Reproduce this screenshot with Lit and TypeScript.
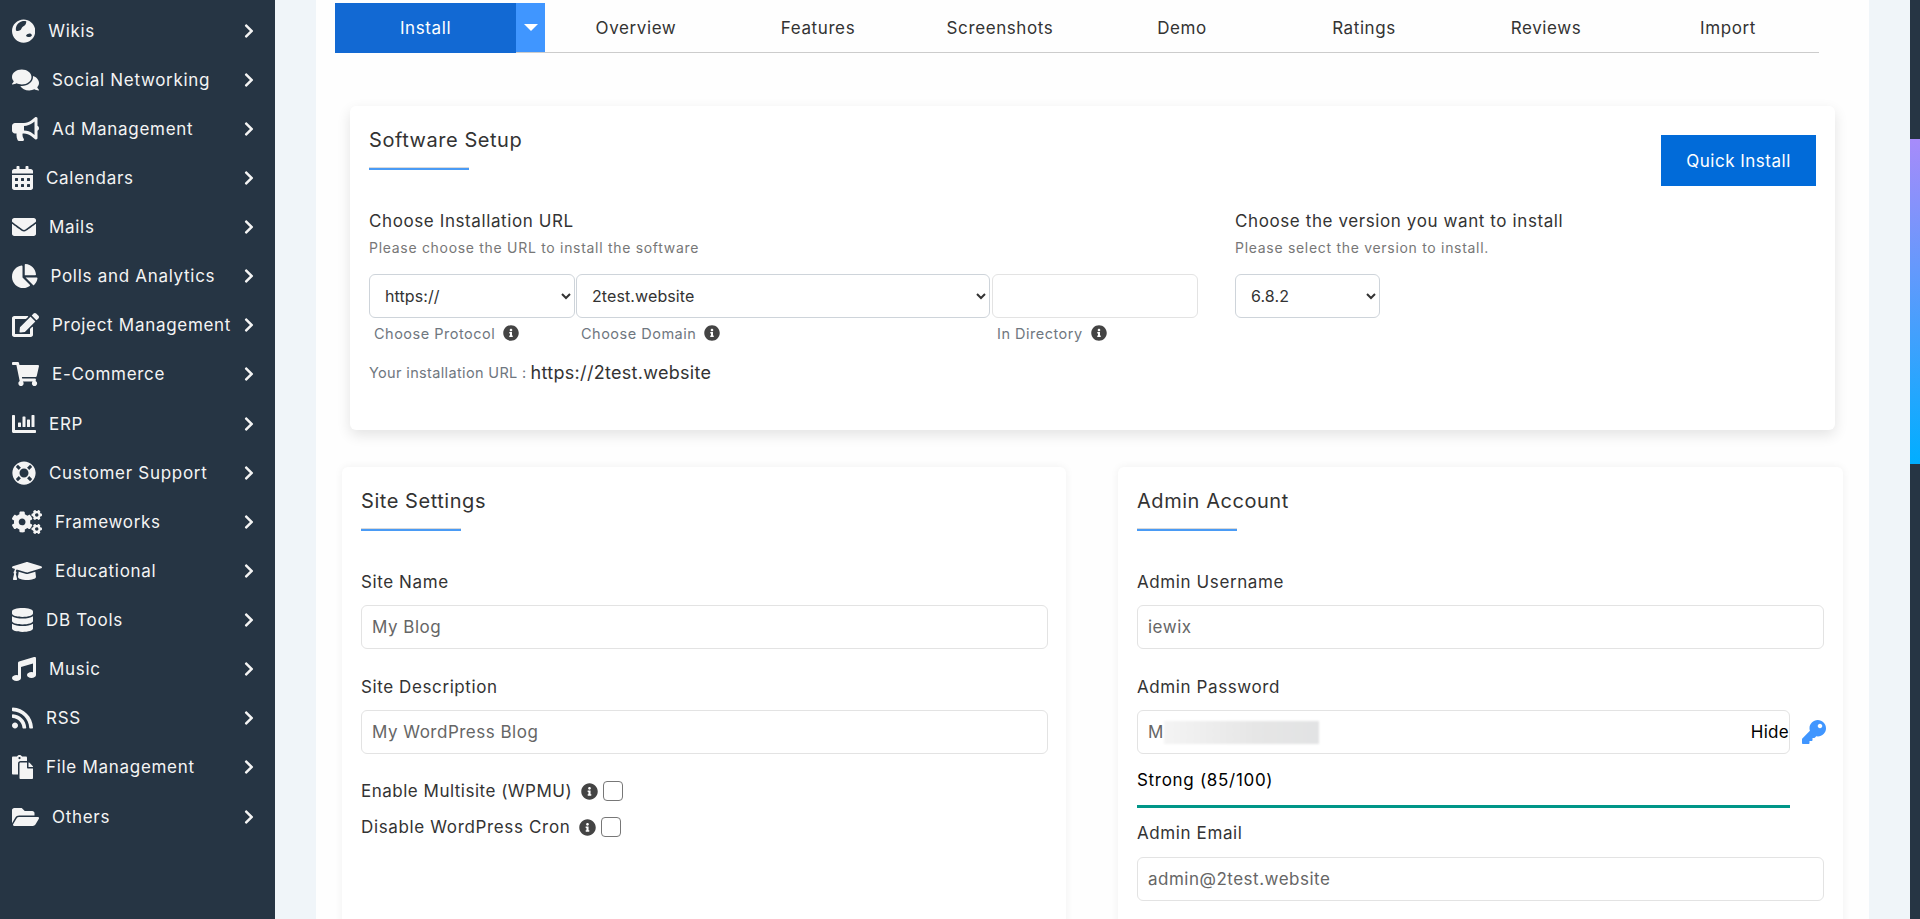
import { LitElement, html, css } from 'lit';
import { customElement } from 'lit/decorators.js';

interface Icon {
  w: number;
  d: string;
}

const I: Record<string, Icon> = {
  globe: { w: 496, d: 'M248 8C111 8 0 119 0 256s111 248 248 248 248-111 248-248S385 8 248 8zM215 46c30-6 60-4 88 4 4 28-6 54-22 78-14 20-40 26-58 42-20 20-24 58-52 72-26 12-58 20-86 2-10-46 6-92 32-130 24-34 58-60 98-68zm120 276c20-12 50-16 72-2 14 10 22 30 10 44-14 16-38 24-60 18-20-4-44-8-54-22-6-14 18-30 32-38z' },
  comments: { w: 576, d: 'M416 192c0-88.4-93.1-160-208-160S0 103.6 0 192c0 34.3 14.1 65.9 38 92-13.4 30.2-35.5 54.2-35.8 54.5-2.2 2.3-2.8 5.7-1.5 8.7S4.8 352 8 352c36.6 0 66.9-12.3 88.7-25 32.2 15.7 70.3 25 111.3 25 114.9 0 208-71.6 208-160zm122 220c23.9-26 38-57.7 38-92 0-66.9-53.5-124.2-129.3-148.1.9 6.6 1.3 13.3 1.3 20.1 0 105.9-107.7 192-240 192-10.8 0-21.3-.8-31.7-1.9C207.8 439.6 281.8 480 368 480c41 0 79.1-9.2 111.3-25 21.8 12.7 52.1 25 88.7 25 3.2 0 6.1-1.9 7.3-4.8 1.3-2.9.7-6.3-1.5-8.7-.3-.3-22.4-24.2-35.8-54.5z' },
  bullhorn: { w: 576, d: 'M576 240c0-23.63-12.95-44.04-32-55.12V32.01C544 23.26 537.02 0 512 0c-7.12 0-14.19 2.38-19.98 7.02l-85.03 68.03C364.28 109.19 310.66 128 256 128H64c-35.35 0-64 28.65-64 64v96c0 35.35 28.65 64 64 64h33.7c-1.39 10.48-2.18 21.14-2.18 32 0 39.77 9.26 77.35 25.56 110.94 5.19 10.69 16.52 17.06 28.4 17.06h74.28c26.05 0 41.69-29.84 25.9-50.56-16.4-21.52-26.15-48.36-26.15-77.44 0-11.11 1.62-21.79 4.41-32H256c54.66 0 108.28 18.81 150.98 52.95l85.03 68.03a32.023 32.023 0 0 0 19.98 7.02c24.92 0 32-22.78 32-32V295.13C563.05 284.04 576 263.63 576 240zm-96 141.42l-33.05-26.44C392.95 311.78 325.12 288 256 288v-96c69.12 0 136.95-23.78 190.95-66.98L480 98.58v282.84z' },
  calendar: { w: 448, d: 'M0 464c0 26.5 21.5 48 48 48h352c26.5 0 48-21.5 48-48V192H0v272zm320-196c0-6.6 5.4-12 12-12h40c6.6 0 12 5.4 12 12v40c0 6.6-5.4 12-12 12h-40c-6.6 0-12-5.4-12-12v-40zm0 128c0-6.6 5.4-12 12-12h40c6.6 0 12 5.4 12 12v40c0 6.6-5.4 12-12 12h-40c-6.6 0-12-5.4-12-12v-40zM192 268c0-6.6 5.4-12 12-12h40c6.6 0 12 5.4 12 12v40c0 6.6-5.4 12-12 12h-40c-6.6 0-12-5.4-12-12v-40zm0 128c0-6.6 5.4-12 12-12h40c6.6 0 12 5.4 12 12v40c0 6.6-5.4 12-12 12h-40c-6.6 0-12-5.4-12-12v-40zM64 268c0-6.6 5.4-12 12-12h40c6.6 0 12 5.4 12 12v40c0 6.6-5.4 12-12 12H76c-6.6 0-12-5.4-12-12v-40zm0 128c0-6.6 5.4-12 12-12h40c6.6 0 12 5.4 12 12v40c0 6.6-5.4 12-12 12H76c-6.6 0-12-5.4-12-12v-40zM400 64h-48V16c0-8.8-7.2-16-16-16h-32c-8.8 0-16 7.2-16 16v48H160V16c0-8.8-7.2-16-16-16h-32c-8.8 0-16 7.2-16 16v48H48C21.5 64 0 85.5 0 112v48h448v-48c0-26.5-21.5-48-48-48z' },
  envelope: { w: 512, d: 'M502.3 190.8c3.9-3.1 9.7-.2 9.7 4.7V400c0 26.5-21.5 48-48 48H48c-26.5 0-48-21.5-48-48V195.6c0-5 5.7-7.8 9.7-4.7 22.4 17.4 52.1 39.5 154.1 113.6 21.1 15.4 56.7 47.8 92.2 47.6 35.7.3 72-32.8 92.3-47.6 102-74.1 131.6-96.3 154-113.7zM256 320c23.2.4 56.6-29.2 73.4-41.4 132.7-96.3 142.8-104.7 173.4-128.7 5.8-4.5 9.2-11.5 9.2-18.9v-19c0-26.5-21.5-48-48-48H48C21.5 64 0 85.5 0 112v19c0 7.4 3.4 14.3 9.2 18.9 30.6 23.9 40.7 32.4 173.4 128.7 16.8 12.2 50.2 41.8 73.4 41.4z' },
  pie: { w: 544, d: 'M527.79 288H290.5l158.03 158.03c6.04 6.04 15.98 6.53 22.19.68 38.7-36.46 65.32-85.61 73.13-140.86 1.34-9.46-6.51-17.85-16.06-17.85zm-15.83-64.8C503.72 103.74 408.26 8.28 288.8.04 279.68-.59 272 7.1 272 16.24V240h223.77c9.14 0 16.82-7.68 16.19-16.8zM224 288V50.71c0-9.55-8.39-17.4-17.84-16.06C86.99 51.49-4.1 155.6.14 280.37 4.5 408.51 114.83 513.59 243.03 511.98c50.4-.63 96.97-16.87 135.26-44.03 7.9-5.6 8.42-17.23 1.57-24.08L224 288z' },
  edit: { w: 576, d: 'M402.6 83.2l90.2 90.2c3.8 3.8 3.8 10 0 13.8L274.4 405.6l-92.8 10.3c-12.4 1.4-22.9-9.1-21.5-21.5l10.3-92.8L388.8 83.2c3.8-3.8 10-3.8 13.8 0zm162-22.9l-48.8-48.8c-15.2-15.2-39.9-15.2-55.2 0l-35.4 35.4c-3.8 3.8-3.8 10 0 13.8l90.2 90.2c3.8 3.8 10 3.8 13.8 0l35.4-35.4c15.2-15.3 15.2-40 0-55.2zM384 346.2V448H64V128h229.8c3.2 0 6.2-1.3 8.5-3.5l40-40c7.6-7.6 2.2-20.5-8.5-20.5H48C21.5 64 0 85.5 0 112v352c0 26.5 21.5 48 48 48h352c26.5 0 48-21.5 48-48V306.2c0-10.7-12.9-16-20.5-8.5l-40 40c-2.2 2.3-3.5 5.3-3.5 8.5z' },
  cart: { w: 576, d: 'M528.12 301.319l47.273-208C578.806 78.301 567.391 64 551.99 64H159.208l-9.166-44.81C147.758 8.021 137.93 0 126.529 0H24C10.745 0 0 10.745 0 24v16c0 13.255 10.745 24 24 24h69.883l70.248 343.435C147.325 417.1 136 435.222 136 456c0 30.928 25.072 56 56 56s56-25.072 56-56c0-15.674-6.447-29.835-16.824-40h209.647C430.447 426.165 424 440.326 424 456c0 30.928 25.072 56 56 56s56-25.072 56-56c0-22.172-12.888-41.332-31.579-50.405l5.517-24.276c3.413-15.018-8.002-29.319-23.403-29.319H218.117l-6.545-32h293.145c11.206 0 20.92-7.754 23.403-18.681z' },
  chart: { w: 512, d: 'M332.8 320h38.4c6.4 0 12.8-6.4 12.8-12.8V172.8c0-6.4-6.4-12.8-12.8-12.8h-38.4c-6.4 0-12.8 6.4-12.8 12.8v134.4c0 6.4 6.4 12.8 12.8 12.8zm96 0h38.4c6.4 0 12.8-6.4 12.8-12.8V76.8c0-6.4-6.4-12.8-12.8-12.8h-38.4c-6.4 0-12.8 6.4-12.8 12.8v230.4c0 6.4 6.4 12.8 12.8 12.8zm-288 0h38.4c6.4 0 12.8-6.4 12.8-12.8v-70.4c0-6.4-6.4-12.8-12.8-12.8h-38.4c-6.4 0-12.8 6.4-12.8 12.8v70.4c0 6.4 6.4 12.8 12.8 12.8zm96 0h38.4c6.4 0 12.8-6.4 12.8-12.8V108.8c0-6.4-6.4-12.8-12.8-12.8h-38.4c-6.4 0-12.8 6.4-12.8 12.8v198.4c0 6.4 6.4 12.8 12.8 12.8zM496 384H64V80c0-8.84-7.16-16-16-16H16C7.16 64 0 71.16 0 80v336c0 17.67 14.33 32 32 32h464c8.84 0 16-7.16 16-16v-32c0-8.84-7.16-16-16-16z' },
  ring: { w: 512, d: 'M256 8C119.033 8 8 119.033 8 256s111.033 248 248 248 248-111.033 248-248S392.967 8 256 8zm173.696 119.559l-63.399 63.399c-10.987-18.559-26.67-34.252-45.255-45.255l63.399-63.399a218.396 218.396 0 0 1 45.255 45.255zM256 352c-53.019 0-96-42.981-96-96s42.981-96 96-96 96 42.981 96 96-42.981 96-96 96zM127.559 82.304l63.399 63.399c-18.559 10.987-34.252 26.67-45.255 45.255l-63.399-63.399a218.372 218.372 0 0 1 45.255-45.255zM82.304 384.441l63.399-63.399c10.987 18.559 26.67 34.252 45.255 45.255l-63.399 63.399a218.396 218.396 0 0 1-45.255-45.255zm302.137 45.255l-63.399-63.399c18.559-10.987 34.252-26.67 45.255-45.255l63.399 63.399a218.403 218.403 0 0 1-45.255 45.255z' },
  cogs: { w: 640, d: 'M512.1 191l-8.2 14.3c-3 5.3-9.4 7.5-15.1 5.4-11.8-4.4-22.6-10.7-32.1-18.6-4.6-3.8-5.8-10.5-2.8-15.7l8.2-14.3c-6.9-8-12.3-17.3-15.9-27.4h-16.5c-6 0-11.2-4.3-12.2-10.3-2-12-2.1-24.6 0-37.1 1-6 6.2-10.4 12.2-10.4h16.5c3.6-10.1 9-19.4 15.9-27.4l-8.2-14.3c-3-5.2-1.9-11.9 2.8-15.7 9.5-7.9 20.4-14.2 32.1-18.6 5.7-2.1 12.1.1 15.1 5.4l8.2 14.3c10.5-1.9 21.2-1.9 31.7 0L552 6.3c3-5.3 9.4-7.5 15.1-5.4 11.8 4.4 22.6 10.7 32.1 18.6 4.6 3.8 5.8 10.5 2.8 15.7l-8.2 14.3c6.9 8 12.3 17.3 15.9 27.4h16.5c6 0 11.2 4.3 12.2 10.3 2 12 2.1 24.6 0 37.1-1 6-6.2 10.4-12.2 10.4h-16.5c-3.6 10.1-9 19.4-15.9 27.4l8.2 14.3c3 5.2 1.9 11.9-2.8 15.7-9.5 7.9-20.4 14.2-32.1 18.6-5.7 2.1-12.1-.1-15.1-5.4l-8.2-14.3c-10.4 1.9-21.2 1.9-31.7 0zm-10.5-58.8c38.5 29.6 82.4-14.3 52.8-52.8-38.5-29.7-82.4 14.3-52.8 52.8zM386.3 286.1l33.7 16.8c10.1 5.8 14.5 18.1 10.5 29.1-8.9 24.2-26.4 46.4-42.6 65.8-7.4 8.9-20.2 11.1-30.3 5.3l-29.1-16.8c-16 13.7-34.6 24.6-54.9 31.7v33.6c0 11.6-8.3 21.6-19.7 23.6-24.6 4.2-50.4 4.4-75.9 0-11.5-2-20-11.9-20-23.6V418c-20.3-7.2-38.9-18-54.9-31.7L74 403c-10 5.8-22.9 3.6-30.3-5.3-16.2-19.4-33.3-41.6-42.2-65.7-4-10.9.4-23.2 10.5-29.1l33.3-16.8c-3.9-20.9-3.9-42.4 0-63.4L12 205.8c-10.1-5.8-14.6-18.1-10.5-29 8.9-24.2 26-46.4 42.2-65.8 7.4-8.9 20.2-11.1 30.3-5.3l29.1 16.8c16-13.7 34.6-24.6 54.9-31.7V57.1c0-11.5 8.2-21.5 19.6-23.5 24.6-4.2 50.5-4.4 76-.1 11.5 2 20 11.9 20 23.6v33.6c20.3 7.2 38.9 18 54.9 31.7l29.1-16.8c10-5.8 22.9-3.6 30.3 5.3 16.2 19.4 33.2 41.6 42.1 65.8 4 10.9.1 23.2-10 29.1l-33.7 16.8c3.9 21 3.9 42.5 0 63.5zm-117.6 21.1c59.2-77-28.7-164.9-105.7-105.7-59.2 77 28.7 164.9 105.7 105.7zm243.4 182.7l-8.2 14.3c-3 5.3-9.4 7.5-15.1 5.4-11.8-4.4-22.6-10.7-32.1-18.6-4.6-3.8-5.8-10.5-2.8-15.7l8.2-14.3c-6.9-8-12.3-17.3-15.9-27.4h-16.5c-6 0-11.2-4.3-12.2-10.3-2-12-2.1-24.6 0-37.1 1-6 6.2-10.4 12.2-10.4h16.5c3.6-10.1 9-19.4 15.9-27.4l-8.2-14.3c-3-5.2-1.9-11.9 2.8-15.7 9.5-7.9 20.4-14.2 32.1-18.6 5.7-2.1 12.1.1 15.1 5.4l8.2 14.3c10.5-1.9 21.2-1.9 31.7 0l8.2-14.3c3-5.3 9.4-7.5 15.1-5.4 11.8 4.4 22.6 10.7 32.1 18.6 4.6 3.8 5.8 10.5 2.8 15.7l-8.2 14.3c6.9 8 12.3 17.3 15.9 27.4h16.5c6 0 11.2 4.3 12.2 10.3 2 12 2.1 24.6 0 37.1-1 6-6.2 10.4-12.2 10.4h-16.5c-3.6 10.1-9 19.4-15.9 27.4l8.2 14.3c3 5.2 1.9 11.9-2.8 15.7-9.5 7.9-20.4 14.2-32.1 18.6-5.7 2.1-12.1-.1-15.1-5.4l-8.2-14.3c-10.4 1.9-21.2 1.9-31.7 0zM501.6 431c38.5 29.6 82.4-14.3 52.8-52.8-38.5-29.6-82.4 14.3-52.8 52.8z' },
  cap: { w: 640, d: 'M622.34 153.2L343.4 67.5c-15.2-4.67-31.6-4.67-46.79 0L17.66 153.2c-23.54 7.23-23.54 38.36 0 45.59l48.63 14.94c-10.67 13.19-17.23 29.28-17.88 46.9C38.78 266.15 32 276.11 32 288c0 10.78 5.68 19.85 13.86 25.65L20.33 428.53C18.11 438.52 25.71 448 35.94 448h56.11c10.24 0 17.84-9.48 15.62-19.47L82.14 313.65C90.32 307.85 96 298.78 96 288c0-11.57-6.47-21.25-15.66-26.87.76-15.02 8.44-28.3 20.69-36.72L296.6 284.5c9.06 2.78 26.44 6.25 46.79 0l278.95-85.7c23.55-7.24 23.55-38.36 0-45.6zM352.79 315.09c-28.53 8.76-52.84 3.92-65.59 0l-145.02-44.55L128 384c0 35.35 85.96 64 192 64s192-28.65 192-64l-14.18-113.47-145.03 44.56z' },
  database: { w: 448, d: 'M448 73.143v45.714C448 159.143 347.667 192 224 192S0 159.143 0 118.857V73.143C0 32.857 100.333 0 224 0s224 32.857 224 73.143zM448 176v102.857C448 319.143 347.667 352 224 352S0 319.143 0 278.857V176c48.125 33.143 136.208 48.572 224 48.572S399.874 209.143 448 176zm0 160v102.857C448 479.143 347.667 512 224 512S0 479.143 0 438.857V336c48.125 33.143 136.208 48.572 224 48.572S399.874 369.143 448 336z' },
  music: { w: 512, d: 'M470.38 1.51L150.41 96A32 32 0 0 0 128 126.51v261.41A139 139 0 0 0 96 384c-53 0-96 28.66-96 64s43 64 96 64 96-28.66 96-64V214.32l256-75v184.61a138.4 138.4 0 0 0-32-3.93c-53 0-96 28.66-96 64s43 64 96 64 96-28.65 96-64V32a32 32 0 0 0-41.62-30.49z' },
  rss: { w: 448, d: 'M128.081 415.959c0 35.369-28.672 64.041-64.041 64.041S0 451.328 0 415.959s28.672-64.041 64.041-64.041 64.04 28.673 64.04 64.041zm175.66 47.25c-8.354-154.6-132.185-278.587-286.95-286.95C7.656 175.765 0 183.105 0 192.253v48.069c0 8.415 6.49 15.472 14.887 16.018 111.832 7.284 201.473 96.702 208.772 208.772.547 8.397 7.604 14.887 16.018 14.887h48.069c9.149.001 16.489-7.655 15.995-16.79zm144.249.288C439.596 229.677 251.465 40.445 16.503 32.01 7.473 31.686 0 38.981 0 48.016v48.068c0 8.625 6.835 15.645 15.453 15.999 191.179 7.839 344.627 161.316 352.465 352.465.353 8.618 7.373 15.453 15.999 15.453h48.068c9.034-.001 16.329-7.474 16.005-16.504z' },
  paste: { w: 448, d: 'M128 184c0-30.879 25.122-56 56-56h136V56c0-13.255-10.745-24-24-24h-80.61C204.306 12.89 183.637 0 160 0s-44.306 12.89-55.39 32H24C10.745 32 0 42.745 0 56v336c0 13.255 10.745 24 24 24h104V184zm32-144c13.255 0 24 10.745 24 24s-10.745 24-24 24-24-10.745-24-24 10.745-24 24-24zm184 248h104v200c0 13.255-10.745 24-24 24H184c-13.255 0-24-10.745-24-24V184c0-13.255 10.745-24 24-24h136v104c0 13.2 10.8 24 24 24zm104-38.059V256h-96v-96h6.059a24 24 0 0 1 16.97 7.029l65.941 65.941a24.002 24.002 0 0 1 7.03 16.971z' },
  folder: { w: 576, d: 'M572.694 292.093L500.27 416.248A63.997 63.997 0 0 1 444.989 448H45.025c-18.523 0-30.064-20.093-20.731-36.093l72.424-124.155A64 64 0 0 1 152 256h399.964c18.523 0 30.064 20.093 20.73 36.093zM152 224h328v-48c0-26.51-21.49-48-48-48H272l-64-64H48C21.49 64 0 85.49 0 112v278.046l69.077-118.418C86.214 242.25 117.989 224 152 224z' },
  chevron: { w: 320, d: 'M285.476 272.971L91.132 467.314c-9.373 9.373-24.569 9.373-33.941 0l-22.667-22.667c-9.357-9.357-9.375-24.522-.04-33.901L188.505 256 34.484 101.255c-9.335-9.379-9.317-24.544.04-33.901l22.667-22.667c9.373-9.373 24.569-9.373 33.941 0L285.475 239.03c9.373 9.372 9.373 24.568.001 33.941z' },
  info: { w: 512, d: 'M256 8C119.043 8 8 119.083 8 256c0 136.997 111.043 248 248 248s248-111.003 248-248C504 119.083 392.957 8 256 8zm0 110c23.196 0 42 18.804 42 42s-18.804 42-42 42-42-18.804-42-42 18.804-42 42-42zm56 254c0 6.627-5.373 12-12 12h-88c-6.627 0-12-5.373-12-12v-24c0-6.627 5.373-12 12-12h12v-64h-12c-6.627 0-12-5.373-12-12v-24c0-6.627 5.373-12 12-12h64c6.627 0 12 5.373 12 12v100h12c6.627 0 12 5.373 12 12v24z' },
  key: { w: 512, d: 'M512 176.001C512 273.203 433.202 352 336 352c-11.22 0-22.19-1.062-32.827-3.069l-24.012 27.014A23.999 23.999 0 0 1 261.223 384H224v40c0 13.255-10.745 24-24 24h-40v40c0 13.255-10.745 24-24 24H24c-13.255 0-24-10.745-24-24v-78.059c0-6.365 2.529-12.47 7.029-16.971l161.802-161.802C163.108 213.814 160 195.271 160 176 160 78.798 238.797.001 335.999 0 433.488-.001 512 78.511 512 176.001zM336 128c0 26.51 21.49 48 48 48s48-21.49 48-48-21.49-48-48-48-48 21.49-48 48z' },
};

const MENU: [string, string][] = [
  ['globe', 'Wikis'],
  ['comments', 'Social Networking'],
  ['bullhorn', 'Ad Management'],
  ['calendar', 'Calendars'],
  ['envelope', 'Mails'],
  ['pie', 'Polls and Analytics'],
  ['edit', 'Project Management'],
  ['cart', 'E-Commerce'],
  ['chart', 'ERP'],
  ['ring', 'Customer Support'],
  ['cogs', 'Frameworks'],
  ['cap', 'Educational'],
  ['database', 'DB Tools'],
  ['music', 'Music'],
  ['rss', 'RSS'],
  ['paste', 'File Management'],
  ['folder', 'Others'],
];

const TABS = ['Overview', 'Features', 'Screenshots', 'Demo', 'Ratings', 'Reviews', 'Import'];

// size is the font-size the icon would have had, width follows its viewBox
function icon(name: string, size: number) {
  const ic = I[name];
  return html`<svg class="ic" viewBox="0 0 ${ic.w} 512" width=${(ic.w / 512) * size} height=${size} fill="currentColor"><path d=${ic.d}></path></svg>`;
}

@customElement('app-root')
export class AppRoot extends LitElement {
  static styles = css`
    :host {
      display: flex;
      width: 1920px;
      height: 919px;
      overflow: hidden;
      font-family: Inter, 'Liberation Sans', sans-serif;
      color: #333;
      background: #f0f5f9;
    }
    * { box-sizing: border-box; }
    .ic { flex: none; display: block; }

    .side {
      width: 275px;
      flex: none;
      background: #263544;
      padding-top: 6px;
    }
    .item {
      height: 49.125px;
      display: flex;
      align-items: center;
      padding: 0 21px 0 12px;
      color: #f4f4f4;
      font-size: 17px;
      gap: 13px;
      white-space: nowrap;
    }
    .item .name { flex: 1; letter-spacing: 0.7px; }
    .item .go { margin-left: -13px; }

    .main {
      flex: 1;
      padding: 0 41px;
      min-width: 0;
    }
    .panel {
      background: #fefefe;
      height: 919px;
      padding-top: 3px;
    }
    .tabs {
      display: flex;
      height: 50px;
      width: 1484px;
      margin-left: 19px;
      border-bottom: 1px solid #ccc;
    }
    .tab {
      width: 182px;
      height: 49px;
      display: flex;
      align-items: center;
      justify-content: center;
      font-size: 17px;
      letter-spacing: 0.6px;
      color: #333;
    }
    .tab.install {
      width: 181px;
      height: 50px;
      background: #1269d3;
      color: #fff;
    }
    .caret {
      width: 29px;
      height: 49px;
      background: #4096ff;
      display: flex;
      align-items: center;
      justify-content: center;
    }
    .caret i {
      border-left: 7px solid transparent;
      border-right: 7px solid transparent;
      border-top: 7px solid #fff;
    }

    .card {
      background: #fff;
      border-radius: 6px;
      padding: 19px;
    }
    .setup {
      width: 1485px;
      margin: 53px 0 0 34px;
      padding-bottom: 46px;
      box-shadow: 0 5px 14px rgba(0, 0, 0, 0.11);
    }
    .head {
      display: flex;
      justify-content: space-between;
      align-items: flex-start;
    }
    .title {
      font-size: 20px;
      line-height: 30px;
      letter-spacing: 0.55px;
      color: #333;
    }
    .rule {
      width: 100px;
      height: 3px;
      margin-top: 12px;
      background: #4a9bf5;
      border-top: 1px solid #d9d9d9;
    }
    .quick {
      width: 155px;
      height: 51px;
      margin-top: 10px;
      background: #016bd9;
      color: #fff;
      font-size: 17px;
      letter-spacing: 0.5px;
      display: flex;
      align-items: center;
      justify-content: center;
    }
    .cols {
      display: flex;
      margin-top: 23px;
    }
    .url-col { width: 866px; }
    .heading {
      font-size: 17px;
      line-height: 24px;
      letter-spacing: 0.6px;
      color: #333;
    }
    .sub {
      font-size: 14px;
      line-height: 20px;
      margin-top: 5px;
      color: #777;
      letter-spacing: 0.7px;
    }
    .fields {
      display: flex;
      gap: 1px;
      margin-top: 16px;
    }
    .field:first-child { width: 206px; }
    .field:nth-child(2) { width: 414px; }
    .field:nth-child(3) { width: 206px; margin-left: 1px; }
    select, input[type='text'] {
      display: block;
      width: 100%;
      height: 44px;
      font: inherit;
      background: #fff;
      border-radius: 6px;
      outline: none;
    }
    select {
      border: 1px solid #ced4da;
      color: #333;
      padding-left: 11px;
      font-size: 16px;
      letter-spacing: 0.1px;
    }
    input[type='text'] {
      border: 1px solid #e3e3e3;
      color: #666;
      padding: 0 10px;
      font-size: 17px;
      letter-spacing: 0.5px;
    }
    .version { width: 145px; margin-top: 16px; }
    .hint {
      display: flex;
      align-items: center;
      gap: 8px;
      margin-top: 5px;
      padding-left: 5px;
      height: 20px;
      font-size: 14.5px;
      letter-spacing: 0.5px;
      color: #6f7780;
    }
    .hint .ic, .check .ic { color: #444; }
    .result {
      display: flex;
      align-items: center;
      gap: 4px;
      margin-top: 17px;
      height: 24px;
      font-size: 14.5px;
      letter-spacing: 0.35px;
      color: #6f7780;
    }
    .result b {
      font-weight: 400;
      font-size: 18px;
      letter-spacing: 0.3px;
      color: #333;
    }

    .pair {
      display: grid;
      grid-template-columns: 724px 725px;
      gap: 52px;
      margin: 37px 0 0 26px;
    }
    .box {
      min-height: 520px;
      box-shadow: 0 0 8px rgba(0, 0, 0, 0.06);
    }
    .box .form { width: 687px; margin-top: 39px; }
    label {
      display: block;
      font-size: 17px;
      line-height: 24px;
      letter-spacing: 0.6px;
      color: #333;
    }
    label + input, label + .pw { margin-top: 11px; }
    input + label { margin-top: 26px; }
    .check {
      display: flex;
      align-items: center;
      height: 24px;
      font-size: 17px;
      letter-spacing: 0.5px;
      color: #333;
      margin-top: 25px;
    }
    .check + .check { margin-top: 12px; letter-spacing: 0.65px; }
    .check .ic { margin: 0 5px 0 9px; }
    .check input {
      appearance: none;
      width: 20px;
      height: 20px;
      margin: 0;
      border: 1px solid #777;
      border-radius: 4px;
      background: #fff;
    }
    .pw {
      display: flex;
      align-items: center;
      gap: 12px;
    }
    .pw-wrap {
      position: relative;
      width: 653px;
      flex: none;
    }
    .pw-wrap .mask {
      position: absolute;
      left: 27px;
      top: 11px;
      width: 155px;
      height: 23px;
      background: linear-gradient(90deg, #f4f4f4, #e6e6e6 60%, #e2e3e4);
      filter: blur(1px);
    }
    .pw-wrap .toggle {
      position: absolute;
      right: 1px;
      top: 12px;
      font-size: 17px;
      letter-spacing: 0.3px;
      color: #000;
    }
    .pw > .ic { color: #4096ff; }
    .strength {
      width: 653px;
      margin-top: 14px;
      font-size: 17px;
      line-height: 24px;
      letter-spacing: 0.7px;
      color: #000;
    }
    .meter {
      width: 653px;
      height: 3px;
      margin-top: 13px;
      background: #009688;
    }
    .meter + label { margin-top: 13px; }
    label + .plain { margin-top: 12px; }

    .track {
      width: 10px;
      flex: none;
      background: #263544;
      padding-top: 139px;
    }
    .thumb {
      height: 325px;
      background: linear-gradient(180deg, #a78bfa, #00aeff);
    }
  `;

  private hint(text: string) {
    return html`<div class="hint"><span>${text}</span>${icon('info', 16)}</div>`;
  }

  private sidebar() {
    return html`<nav class="side">
      ${MENU.map(
        ([ic, name]) => html`<div class="item">
          ${icon(ic, 24)}<span class="name">${name}</span>
          <span class="go">${icon('chevron', 16)}</span>
        </div>`
      )}
    </nav>`;
  }

  private tabs() {
    return html`<div class="tabs">
      <div class="tab install">Install</div>
      <div class="caret"><i></i></div>
      ${TABS.map(t => html`<div class="tab">${t}</div>`)}
    </div>`;
  }

  private setup() {
    return html`<section class="card setup">
      <div class="head">
        <div>
          <div class="title">Software Setup</div>
          <div class="rule"></div>
        </div>
        <div class="quick">Quick Install</div>
      </div>
      <div class="cols">
        <div class="url-col">
          <div class="heading">Choose Installation URL</div>
          <div class="sub">Please choose the URL to install the software</div>
          <div class="fields">
            <div class="field">
              <select><option>https://</option></select>
              ${this.hint('Choose Protocol')}
            </div>
            <div class="field">
              <select><option>2test.website</option></select>
              ${this.hint('Choose Domain')}
            </div>
            <div class="field">
              <input type="text" />
              ${this.hint('In Directory')}
            </div>
          </div>
          <div class="result">Your installation URL : <b>https://2test.website</b></div>
        </div>
        <div>
          <div class="heading">Choose the version you want to install</div>
          <div class="sub">Please select the version to install.</div>
          <div class="version"><select><option>6.8.2</option></select></div>
        </div>
      </div>
    </section>`;
  }

  private siteSettings() {
    return html`<section class="card box">
      <div class="title">Site Settings</div>
      <div class="rule"></div>
      <div class="form">
        <label>Site Name</label>
        <input type="text" value="My Blog" />
        <label>Site Description</label>
        <input type="text" value="My WordPress Blog" />
        <div class="check"><span>Enable Multisite (WPMU)</span>${icon('info', 17)}<input type="checkbox" /></div>
        <div class="check"><span>Disable WordPress Cron</span>${icon('info', 17)}<input type="checkbox" /></div>
      </div>
    </section>`;
  }

  private adminAccount() {
    return html`<section class="card box">
      <div class="title">Admin Account</div>
      <div class="rule"></div>
      <div class="form">
        <label>Admin Username</label>
        <input type="text" value="iewix" />
        <label>Admin Password</label>
        <div class="pw">
          <div class="pw-wrap">
            <input type="text" value="M" />
            <div class="mask"></div>
            <span class="toggle">Hide</span>
          </div>
          ${icon('key', 24)}
        </div>
        <div class="strength">Strong (85/100)</div>
        <div class="meter"></div>
        <label>Admin Email</label>
        <input class="plain" type="text" value="admin@2test.website" />
      </div>
    </section>`;
  }

  render() {
    return html`
      ${this.sidebar()}
      <main class="main">
        <div class="panel">
          ${this.tabs()}
          ${this.setup()}
          <div class="pair">${this.siteSettings()}${this.adminAccount()}</div>
        </div>
      </main>
      <div class="track"><div class="thumb"></div></div>
    `;
  }
}
